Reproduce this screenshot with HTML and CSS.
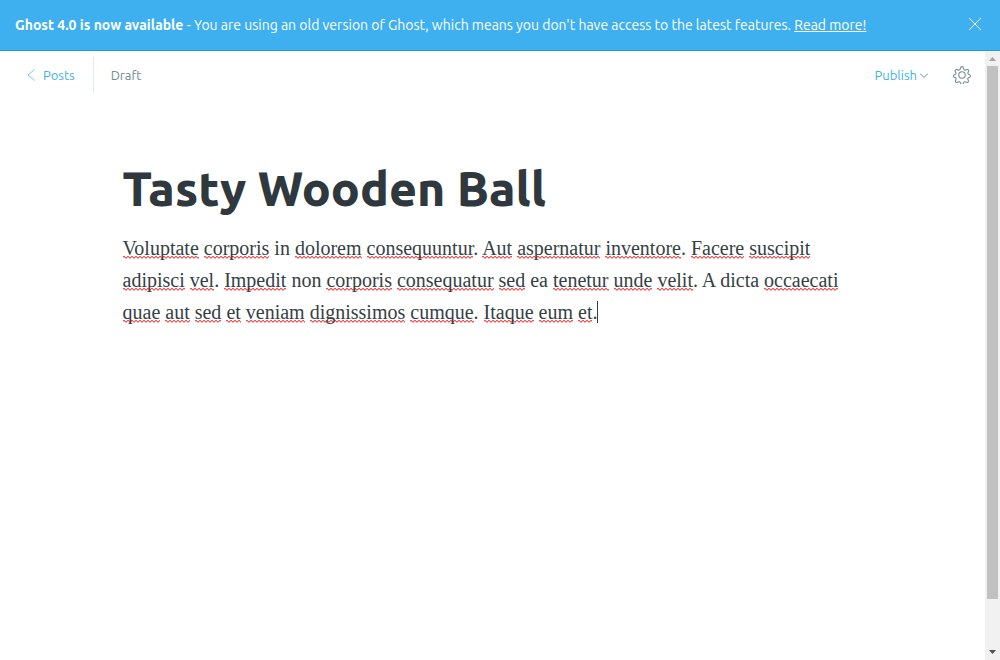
FILE: index.html
```html
<!DOCTYPE html>
<html lang="en">
<head>
<meta charset="utf-8">
<title>Tasty Wooden Ball</title>
<link rel="stylesheet" href="styles.css">
</head>
<body>
<aside class="alert">
  <p class="alert-text"><b>Ghost 4.0 is now available</b> - You are using an old version of Ghost, which means you don't have access to the latest features. <a href="#" class="alert-link">Read more!</a></p>
  <button class="alert-close" type="button" aria-label="Close"><svg width="12" height="12" viewBox="0 0 12 12"><path d="M0 0l12 12M12 0L0 12"/></svg></button>
</aside>
<div class="viewport">
  <div class="editor">
    <header class="toolbar">
      <a href="#" class="back"><svg width="8" height="12" viewBox="0 0 8 12"><path d="M7.500 0.500L1 6l6.500 5.500"/></svg>Posts</a>
      <span class="status">Draft</span>
      <button class="publish" type="button">Publish<svg width="8" height="5" viewBox="0 0 8 5"><path d="M0 .5l4 4 4-4"/></svg></button>
      <button class="settings" type="button" aria-label="Settings"><svg width="18" height="18" viewBox="0 0 24 24"><circle cx="12" cy="12" r="4.300"/><path d="M13.700 2.600l.6 1.500a2.100 2.100 0 0 0 2.700 1.200l1.500-.6a1.800 1.800 0 0 1 2.300 2.400l-.7 1.500a2.100 2.100 0 0 0 1.100 2.700l1 .4a1.800 1.800 0 0 1 0 3.200l-1.200.5a2.100 2.100 0 0 0-1.100 2.700l.6 1.400a1.800 1.800 0 0 1-2.300 2.300l-1.500-.6a2.100 2.100 0 0 0-2.700 1.200l-.5 1.300a1.800 1.800 0 0 1-3.200 0l-.5-1.300a2.100 2.100 0 0 0-2.700-1.200l-1.500.6a1.800 1.800 0 0 1-2.300-2.300l.6-1.400a2.100 2.100 0 0 0-1.100-2.700l-1.200-.5a1.800 1.800 0 0 1 0-3.200l1-.4a2.100 2.100 0 0 0 1.100-2.700l-.7-1.500a1.800 1.800 0 0 1 2.300-2.400l1.500.6a2.100 2.100 0 0 0 2.700-1.200l.6-1.500a1.800 1.800 0 0 1 3.600 0z"/></svg></button>
    </header>
    <main class="post">
      <input class="title" type="text" aria-label="Post title" value="Tasty Wooden Ball" spellcheck="false">
      <div class="body" contenteditable="true" role="textbox" aria-label="Post body" aria-multiline="true" spellcheck="false"><p><u>Voluptate</u> <u>corporis</u> in <u>dolorem</u> <u>consequuntur</u>. <u>Aut</u> <u>aspernatur</u> <u>inventore</u>. <u>Facere</u> <u>suscipit</u> <u>adipisci</u> <u>vel</u>. <u>Impedit</u> non <u>corporis</u> <u>consequatur</u> <u>sed</u> ea <u>tenetur</u> <u>unde</u> <u>velit</u>. A dicta <u>occaecati</u> <u>quae</u> <u>aut</u> <u>sed</u> <u>et</u> <u>veniam</u> <u>dignissimos</u> <u>cumque</u>. <u>Itaque</u> <u>eum</u> <u>et</u>.<span class="caret"></span></p></div>
    </main>
  </div>
  <div class="scrollbar" aria-hidden="true">
    <svg class="arrow" width="15" height="15" viewBox="0 0 15 15"><path fill="#a3a3a3" d="M4 10l3.500-4L11 10z"/></svg>
    <div class="track"><div class="thumb"></div></div>
    <svg class="arrow" width="15" height="15" viewBox="0 0 15 15"><path fill="#505050" d="M4 5l3.500 4L11 5z"/></svg>
  </div>
</div>
</body>
</html>
```
FILE: styles.css
```css
* { box-sizing: border-box; }
body {
  margin: 0;
  height: 100vh;
  display: flex;
  flex-direction: column;
  background: #fff;
  color: #343f44;
  font-family: Ubuntu, "Noto Sans", "Open Sans", sans-serif;
  font-size: 13px;
}
button {
  padding: 0;
  border: 0;
  background: none;
  color: inherit;
  font: inherit;
}
svg {
  display: block;
  fill: none;
}
.alert {
  display: flex;
  align-items: center;
  justify-content: space-between;
  padding: 15px;
  border-bottom: 1px solid #1c9eea;
  background: #3eb0ef;
  color: #fff;
  font-size: 14px;
  line-height: 20px;
}
.alert-text { margin: 0; }
.alert-link { color: inherit; }
.alert-close svg { margin: 0 4px 2px 0; stroke: #fff; }
.viewport {
  flex: 1;
  min-height: 0;
  display: flex;
}
.editor { flex: 1; min-width: 0; }
.toolbar {
  display: flex;
  align-items: center;
  padding: 6px 14px 0 27px;
  line-height: 36px;
}
.back {
  display: flex;
  align-items: center;
  gap: 8px;
  padding-right: 18px;
  border-right: 1px solid #dfe9f1;
  color: #3eb0ef;
  text-decoration: none;
}
.back svg { stroke: #3eb0ef; opacity: .7; }
.status { margin-left: 17px; color: #738a94; }
.publish {
  display: flex;
  align-items: center;
  gap: 3px;
  margin-left: auto;
  color: #3eb0ef;
}
.publish svg { stroke: #738a94; }
.settings { margin-left: 25px; }
.settings svg { stroke: #738a94; stroke-width: 1.400; }
.post {
  max-width: 740px;
  margin: 0 auto;
  padding-top: 64px;
}
.title {
  display: block;
  width: 100%;
  height: 62px;
  padding: 0;
  border: 0;
  outline: 0;
  background: none;
  color: #2e383d;
  font: 800 48px/62px Ubuntu, "Noto Sans", "Open Sans", sans-serif;
}
.body {
  margin-top: 13px;
  outline: 0;
  font: 20px/32px "Liberation Serif", serif;
}
.body p { margin: 0; }
.body u {
  text-decoration: none;
  background: url("data:image/svg+xml,%3Csvg xmlns='http://www.w3.org/2000/svg' width='4' height='3'%3E%3Cpath d='M0 0h2v1H0zM2 1h2v1H2z' fill='%23ff5050'/%3E%3Cpath d='M0 1h2v1H0zM2 2h2v1H2z' fill='%23ffb0b0'/%3E%3C/svg%3E") left bottom repeat-x;
}
.caret {
  display: inline-block;
  height: 22px;
  border-left: 1px solid #343f44;
  vertical-align: text-bottom;
}
.scrollbar {
  width: 15px;
  display: flex;
  flex-direction: column;
  background: #f1f1f1;
}
.track { flex: 1; padding: 0 2px; }
.thumb { height: 92%; background: #c1c1c1; }
```
